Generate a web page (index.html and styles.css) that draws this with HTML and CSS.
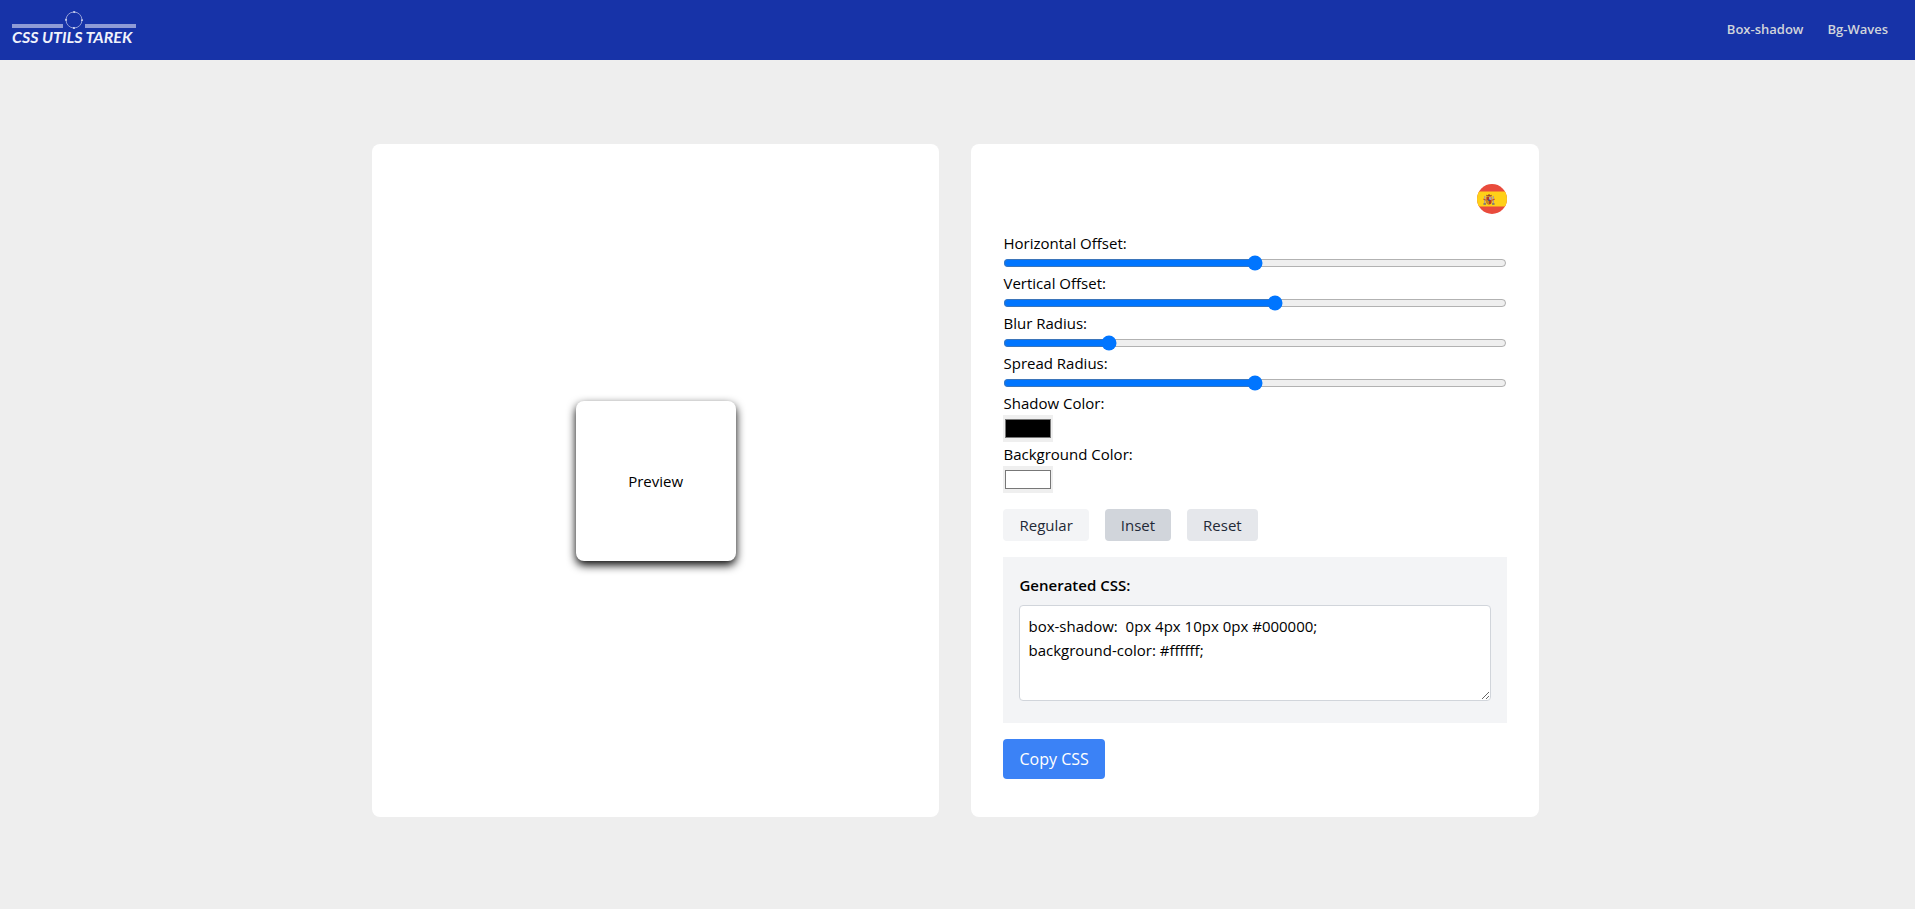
FILE: index.html
```html
<!DOCTYPE html>
<html lang="en">
<head>
<meta charset="utf-8">
<meta name="viewport" content="width=device-width, initial-scale=1">
<title>CSS Utils Tarek</title>
<link rel="stylesheet" href="styles.css">
</head>
<body>
<header class="topbar">
  <a href="#" class="logo" aria-label="CSS Utils Tarek">
    <svg width="124" height="34" viewBox="0 0 124 34">
      <rect x="0" y="12" width="51" height="4" fill="#8f9bd6"/>
      <rect x="73" y="12" width="51" height="4" fill="#8f9bd6"/>
      <circle cx="62" cy="8" r="8" fill="none" stroke="#8f9bd6" stroke-width="1"/>
      <circle cx="62" cy="8" r="8" fill="none" stroke="#e8ebf8" stroke-width="1.4" stroke-dasharray="2 10.57" stroke-dashoffset="1"/>
      <text class="logo-text" x="0" y="31">CSS UTILS TAREK</text>
    </svg>
  </a>
  <nav class="nav">
    <a href="#box-shadow">Box-shadow</a>
    <a href="#bg-waves">Bg-Waves</a>
  </nav>
</header>
<main class="page">
  <div class="columns">
    <section class="card preview">
      <div class="preview-box">Preview</div>
    </section>
    <section class="card controls">
      <button type="button" class="lang" aria-label="Español">
        <svg width="30" height="30" viewBox="0 0 30 30">
          <clipPath id="disc"><circle cx="15" cy="15" r="15"/></clipPath>
          <g clip-path="url(#disc)">
            <rect width="30" height="30" fill="#e94b3c"/>
            <rect y="7.5" width="30" height="15" fill="#ffd018"/>
            <rect x="7" y="12" width="1.4" height="8" fill="#b5a08c"/>
            <rect x="15.6" y="12" width="1.4" height="8" fill="#b5a08c"/>
            <rect x="6.4" y="19.3" width="2.6" height="1.4" fill="#6b6a7d"/>
            <rect x="15" y="19.3" width="2.6" height="1.4" fill="#6b6a7d"/>
            <path d="M6.3 15.2l2.8 1M15 16.2l2.8-1" stroke="#c8402b" stroke-width="1"/>
            <path d="M9.4 13h5.2v4.8a2.6 2.6 0 0 1-5.2 0z" fill="#b8352a"/>
            <path d="M12 13h2.6v3H12z" fill="#b3a3a8"/>
            <path d="M9.4 16H12v4.3a2.6 2.6 0 0 1-2.6-2.5z" fill="#c98a1c"/>
            <circle cx="12" cy="16.2" r=".9" fill="#37508c"/>
            <path d="M9.6 12.6l-.5-1.8 1.6.4 1.3-1.1 1.3 1.1 1.6-.4-.5 1.8z" fill="#9c4428"/>
          </g>
        </svg>
      </button>
      <div class="field">
        <label for="h-offset">Horizontal Offset:</label>
        <input id="h-offset" type="range" min="-50" max="50" value="0">
      </div>
      <div class="field">
        <label for="v-offset">Vertical Offset:</label>
        <input id="v-offset" type="range" min="-50" max="50" value="4">
      </div>
      <div class="field">
        <label for="blur">Blur Radius:</label>
        <input id="blur" type="range" min="0" max="50" value="10">
      </div>
      <div class="field">
        <label for="spread">Spread Radius:</label>
        <input id="spread" type="range" min="-50" max="50" value="0">
      </div>
      <div class="field">
        <label for="shadow-color">Shadow Color:</label>
        <input id="shadow-color" type="color" value="#000000">
      </div>
      <div class="field">
        <label for="bg-color">Background Color:</label>
        <input id="bg-color" type="color" value="#ffffff">
      </div>
      <div class="modes">
        <button type="button" class="mode mode-regular">Regular</button>
        <button type="button" class="mode mode-inset">Inset</button>
        <button type="button" class="mode mode-reset">Reset</button>
      </div>
      <div class="output">
        <label for="css">Generated CSS:</label>
        <textarea id="css" readonly>box-shadow:  0px 4px 10px 0px #000000;
background-color: #ffffff;</textarea>
      </div>
      <button type="button" class="copy">Copy CSS</button>
    </section>
  </div>
</main>
</body>
</html>
```

FILE: styles.css
```css
*,
*::before,
*::after {
  box-sizing: border-box;
}

body {
  margin: 0;
  min-height: 100vh;
  display: flex;
  flex-direction: column;
  background: #eeeeee;
  color: #000;
  font: 15px/24px "Segoe UI", "Open Sans", "Noto Sans", sans-serif;
}

button,
input,
textarea {
  margin: 0;
  border: 0;
  font: inherit;
  color: inherit;
}

.topbar {
  display: flex;
  align-items: center;
  justify-content: space-between;
  height: 60px;
  padding: 0 27px 2px 12px;
  background: #1733a8;
}

.logo,
.logo svg {
  display: block;
}

.logo svg {
  overflow: visible;
}

.logo-text {
  font: italic 700 16px Lato, sans-serif;
  fill: #f0f2fb;
}

.nav {
  display: flex;
  gap: 24px;
}

.nav a {
  color: #d1d5db;
  font-size: 13px;
  font-weight: 600;
  text-decoration: none;
}

.page {
  flex: 1;
  display: flex;
  align-items: center;
  justify-content: center;
  padding: 0 4px 8px 0;
}

.columns {
  display: grid;
  grid-template-columns: 1fr 1fr;
  gap: 32px;
  width: 61.1%;
}

.card {
  padding: 40px 32px 38px;
  border-radius: 8px;
  background: #fff;
}

.preview {
  display: flex;
  align-items: center;
  justify-content: center;
  padding: 38px 32px;
}

.preview-box {
  display: flex;
  align-items: center;
  justify-content: center;
  width: 160px;
  height: 160px;
  border-radius: 8px;
  background: #fff;
  box-shadow: 0 4px 10px 0 #000;
}

.controls {
  display: flex;
  flex-direction: column;
  align-items: stretch;
}

.lang {
  align-self: flex-end;
  width: 30px;
  height: 30px;
  margin-bottom: 17px;
  padding: 0;
  background: none;
}

.lang svg {
  display: block;
}

.field label,
.output label {
  display: block;
}

.field input {
  display: block;
}

.field input[type="range"] {
  width: 100%;
  height: 16px;
}

.field input[type="color"] {
  width: 50px;
  height: 27px;
  padding: 0;
  background: #efefef;
}

.modes {
  display: flex;
  gap: 16px;
  margin: 16px 0;
}

.mode {
  padding: 4px 16px;
  border-radius: 4px;
  color: #1f2937;
}

.mode-regular {
  background: #f3f4f6;
}

.mode-inset {
  background: #d1d5db;
}

.mode-reset {
  background: #e5e7eb;
}

.output {
  padding: 16px 16px 22px;
  background: #f3f4f6;
}

.output label {
  margin-bottom: 8px;
  font-weight: 600;
}

.output textarea {
  display: block;
  width: 100%;
  height: 96px;
  padding: 8px;
  border: 1px solid #d1d5db;
  border-radius: 4px;
  background: #fff;
  resize: vertical;
}

.copy {
  align-self: flex-start;
  margin-top: 16px;
  padding: 8px 16px;
  border-radius: 4px;
  background: #3b82f6;
  color: #fff;
  font-size: 16px;
}
```
